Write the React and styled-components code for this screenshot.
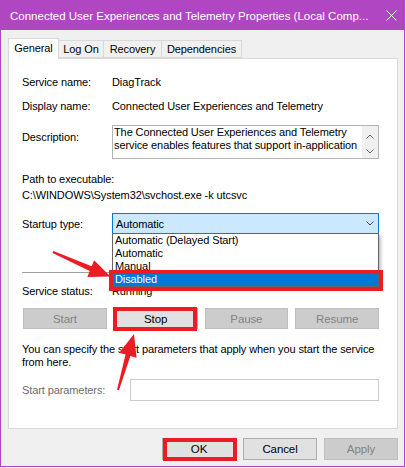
import React from 'react';
import styled, { createGlobalStyle } from 'styled-components';

const RED = '#ec1c24';
const PURPLE = '#b146c2';

const Global = createGlobalStyle`
  html, body { margin: 0; padding: 0; background: #ffffff; }
  body { font-family: "Liberation Sans", Arial, sans-serif; }
`;

const Window = styled.div`
  position: relative;
  width: 405px;
  height: 467px;
  box-sizing: border-box;
  border: 1px solid ${PURPLE};
  border-top: none;
  background: #f0f0f0;
  display: flex;
  flex-direction: column;
  font-family: "Liberation Sans", Arial, sans-serif;
  font-size: 11px;
  letter-spacing: -0.1px;
  color: #000;
  overflow: hidden;
`;

const TitleBar = styled.div`
  height: 30px;
  flex: none;
  background: ${PURPLE};
  color: #fff;
  display: flex;
  align-items: center;
  justify-content: space-between;
  padding: 0 7px 0 9px;
  font-size: 11.5px;
  letter-spacing: 0;
`;

const Title = styled.span`
  white-space: nowrap;
  padding-top: 1px;
`;

const CloseIcon = styled.svg`
  width: 11px;
  height: 11px;
  display: block;
`;

const Body = styled.div`
  flex: 1;
  display: flex;
  flex-direction: column;
  padding: 8px 6px 6px 7px;
`;

const TabStrip = styled.div`
  display: flex;
  align-items: flex-end;
  height: 20px;
  position: relative;
  z-index: 1;
`;

const Tab = styled.div`
  box-sizing: border-box;
  width: ${p => p.$w}px;
  height: ${p => (p.$active ? 21 : 18)}px;
  margin-bottom: ${p => (p.$active ? -1 : 0)}px;
  margin-left: ${p => (p.$first ? 0 : -1)}px;
  border: 1px solid #d9d9d9;
  border-bottom: ${p => (p.$active ? 'none' : '1px solid #d9d9d9')};
  background: ${p => (p.$active ? '#ffffff' : '#f0f0f0')};
  display: flex;
  justify-content: center;
  padding-top: ${p => (p.$active ? 3 : 2)}px;
  line-height: 13px;
  position: relative;
  z-index: ${p => (p.$active ? 2 : 1)};
`;

const Panel = styled.div`
  box-sizing: border-box;
  height: 371px;
  background: #fff;
  border: 1px solid #d9d9d9;
  padding: 16px 18px 0 13px;
  display: flex;
  flex-direction: column;
`;

const Field = styled.div`
  display: grid;
  grid-template-columns: ${p => p.$label || 90}px 1fr;
  margin-top: ${p => p.$mt || 0}px;
  line-height: 14px;
  align-items: ${p => p.$center ? 'center' : 'start'};
  position: relative;
`;

const Label = styled.div`
  white-space: nowrap;
  padding-top: ${p => p.$pt || 0}px;
  color: ${p => (p.$disabled ? '#6d6d6d' : '#000')};
`;

const Value = styled.div`
  white-space: nowrap;
`;

const Block = styled.div`
  margin-top: ${p => p.$mt || 0}px;
  line-height: ${p => p.$lh || 14}px;
  white-space: nowrap;
`;

const DescBox = styled.div`
  height: 34px;
  box-sizing: border-box;
  border: 1px solid #b4b4b4;
  display: flex;
  overflow: hidden;
`;

const DescText = styled.div`
  flex: 1;
  padding: 0 0 0 1px;
  line-height: 13px;
  white-space: nowrap;
  overflow: hidden;
`;

const ScrollBar = styled.div`
  width: 16px;
  flex: none;
  background: #f0f0f0;
  display: flex;
  flex-direction: column;
  justify-content: space-between;
  align-items: center;
  padding: 8px 0 4px;
`;

const Chevron = styled.svg`
  width: 8px;
  height: 5px;
  display: block;
`;

const Combo = styled.div`
  position: relative;
  height: 21px;
  box-sizing: border-box;
  border: 1px solid #0078d7;
  background: #cce8ff;
  display: flex;
  align-items: center;
  justify-content: space-between;
  padding: 0 4px 0 3px;
  z-index: 5;
`;

const DropList = styled.div`
  position: absolute;
  left: -1px;
  right: -1px;
  top: 100%;
  background: #fff;
  border: 1px solid #646464;
  box-shadow: 2px 2px 3px rgba(0, 0, 0, 0.25);
  z-index: 6;
`;

const Option = styled.div`
  position: relative;
  height: 13px;
  line-height: 13px;
  padding-left: 2px;
  background: ${p => (p.$selected ? '#0078d7' : '#fff')};
  color: ${p => (p.$selected ? '#fff' : '#000')};
  white-space: nowrap;
`;

const Highlight = styled.div`
  position: absolute;
  top: ${p => p.$t}px;
  right: ${p => p.$r}px;
  bottom: ${p => p.$b}px;
  left: ${p => p.$l}px;
  border: 4px solid ${RED};
  pointer-events: none;
  z-index: 3;
`;

const Separator = styled.div`
  margin-top: ${p => p.$mt}px;
  height: 1px;
  background: #a0a0a0;
`;

const ButtonRow = styled.div`
  display: grid;
  grid-template-columns: repeat(4, 1fr);
  gap: 7px;
  margin: 10px 0 0 1px;
`;

const Button = styled.div`
  position: relative;
  box-sizing: border-box;
  height: ${p => p.$h || 21}px;
  width: ${p => (p.$w ? `${p.$w}px` : 'auto')};
  border: 1px solid ${p => (p.$disabled ? '#bfbfbf' : '#adadad')};
  background: ${p => (p.$disabled ? '#cccccc' : '#e1e1e1')};
  color: ${p => (p.$disabled ? '#838383' : '#000')};
  display: flex;
  align-items: center;
  justify-content: center;
  font-size: 11.5px;
`;

const TextInput = styled.div`
  height: 22px;
  box-sizing: border-box;
  border: 1px solid #cccccc;
  background: #fff;
`;

const Footer = styled.div`
  display: flex;
  justify-content: flex-end;
  gap: 7px;
  margin-top: 9px;
`;

const Overlay = styled.svg`
  position: absolute;
  left: 0;
  top: 0;
  width: 405px;
  height: 467px;
  pointer-events: none;
  z-index: 20;
`;

const ChevronUp = () => (
  <Chevron viewBox="0 0 8 5">
    <path d="M0.5 4.5 L4 1 L7.5 4.5" fill="none" stroke="#606060" strokeWidth="1" />
  </Chevron>
);
const ChevronDown = ({ color = '#606060' }) => (
  <Chevron viewBox="0 0 8 5">
    <path d="M0.5 0.5 L4 4 L7.5 0.5" fill="none" stroke={color} strokeWidth="1" />
  </Chevron>
);

export default function App() {
  return (
    <>
      <Global />
      <Window>
        <TitleBar>
          <Title>Connected User Experiences and Telemetry Properties (Local Comp...</Title>
          <CloseIcon viewBox="0 0 11 11">
            <path d="M0.5 0.5 L10.5 10.5 M10.5 0.5 L0.5 10.5" stroke="#fff" strokeWidth="1" />
          </CloseIcon>
        </TitleBar>
        <Body>
          <TabStrip>
            <Tab $w={51} $active $first>General</Tab>
            <Tab $w={46}>Log On</Tab>
            <Tab $w={59}>Recovery</Tab>
            <Tab $w={81}>Dependencies</Tab>
          </TabStrip>
          <Panel>
            <Field>
              <Label>Service name:</Label>
              <Value>DiagTrack</Value>
            </Field>
            <Field $mt={10}>
              <Label>Display name:</Label>
              <Value>Connected User Experiences and Telemetry</Value>
            </Field>
            <Field $mt={12}>
              <Label $pt={5}>Description:</Label>
              <DescBox>
                <DescText>
                  The Connected User Experiences and Telemetry
                  <br />
                  service enables features that support in-application
                </DescText>
                <ScrollBar>
                  <ChevronUp />
                  <ChevronDown />
                </ScrollBar>
              </DescBox>
            </Field>
            <Block $mt={13}>Path to executable:</Block>
            <Block $mt={2}>C:\WINDOWS\System32\svchost.exe -k utcsvc</Block>
            <Field $mt={11} $center style={{ zIndex: 5 }}>
              <Label>Startup type:</Label>
              <Combo>
                <span>Automatic</span>
                <ChevronDown color="#444" />
                <DropList>
                  <Option>Automatic (Delayed Start)</Option>
                  <Option>Automatic</Option>
                  <Option>Manual</Option>
                  <Option $selected>
                    Disabled
                    <Highlight $t={-3} $r={-5} $b={-5} $l={-4} />
                  </Option>
                </DropList>
              </Combo>
            </Field>
            <Separator $mt={38} />
            <Field $mt={11}>
              <Label>Service status:</Label>
              <Value>Running</Value>
            </Field>
            <ButtonRow>
              <Button $disabled>Start</Button>
              <Button>
                Stop
                <Highlight $t={-2} $r={0} $b={-3} $l={-2} />
              </Button>
              <Button $disabled>Pause</Button>
              <Button $disabled>Resume</Button>
            </ButtonRow>
            <Block $mt={14} $lh={13}>
              You can specify the start parameters that apply when you start the service
              <br />
              from here.
            </Block>
            <Field $mt={10} $label={108} $center>
              <Label $disabled>Start parameters:</Label>
              <TextInput />
            </Field>
          </Panel>
          <Footer>
            <Button $w={74} $h={22}>
              OK
              <Highlight $t={-1} $r={-2} $b={-2} $l={0} />
            </Button>
            <Button $w={74} $h={22}>Cancel</Button>
            <Button $w={74} $h={22} $disabled>Apply</Button>
          </Footer>
        </Body>
        <Overlay viewBox="0 0 405 467">
          <polygon
            fill={RED}
            points="52.4,251.1 90.7,266.3 93.1,260.3 109.5,276.5 86.3,276.9 88.7,270.9 51.6,252.9"
          />
          <polygon
            fill={RED}
            points="117.96,390.3 129.35,355.9 135.6,357.7 133,334 118.3,352.7 124.55,354.5 116.04,389.7"
          />
        </Overlay>
      </Window>
    </>
  );
}
